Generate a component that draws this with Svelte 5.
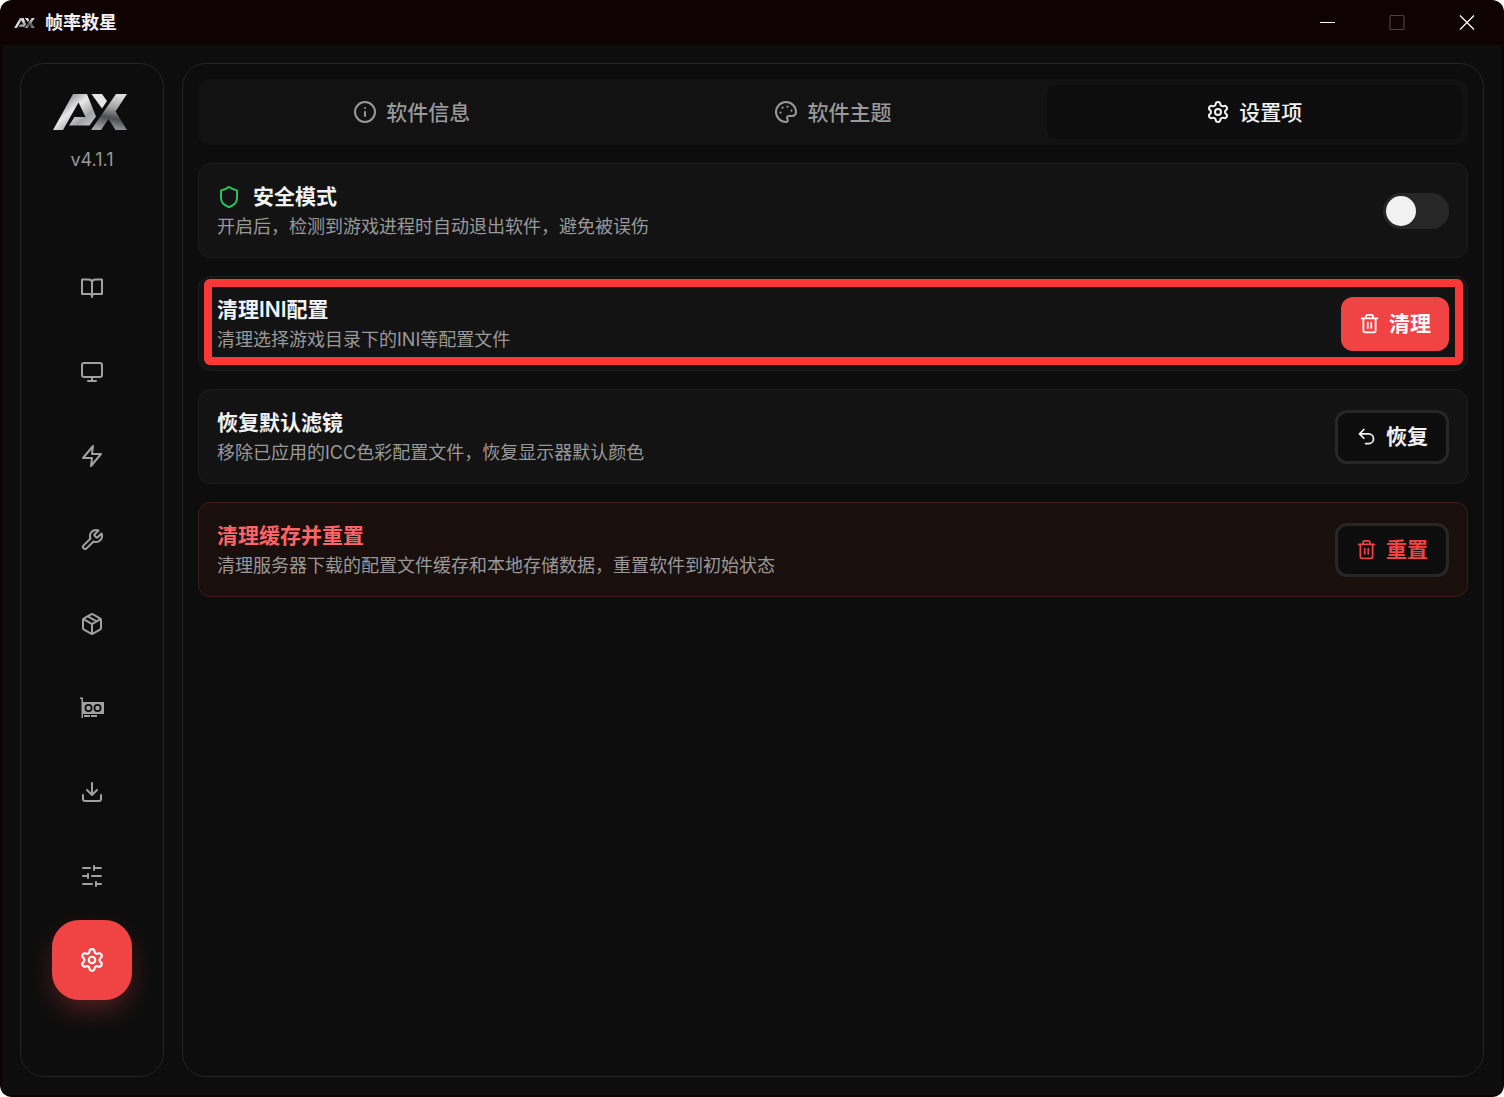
<script lang="ts">
  type Shape = { d: string; fill?: boolean };

  const gear =
    'M9.671 4.136a2.34 2.34 0 0 1 4.659 0 2.34 2.34 0 0 0 3.319 1.915 2.34 2.34 0 0 1 2.33 4.033 2.34 2.34 0 0 0 0 3.831 2.34 2.34 0 0 1-2.33 4.033 2.34 2.34 0 0 0-3.319 1.915 2.34 2.34 0 0 1-4.659 0 2.34 2.34 0 0 0-3.32-1.915 2.34 2.34 0 0 1-2.33-4.033 2.34 2.34 0 0 0 0-3.831A2.34 2.34 0 0 1 6.35 6.051a2.34 2.34 0 0 0 3.319-1.915M15 12a3 3 0 1 1-6 0 3 3 0 0 1 6 0z';

  const icons: Record<string, Shape> = {
    book: { d: 'M2 3.500h6.500c2 0 3.500 1.200 3.500 3 0-1.800 1.500-3 3.500-3H22v14.500h-7.500c-1.500 0-2.500.8-2.500 2 0-1.200-1-2-2.500-2H2zM12 6.500v14.500' },
    monitor: { d: 'M4 3h16a2 2 0 0 1 2 2v10a2 2 0 0 1-2 2H4a2 2 0 0 1-2-2V5a2 2 0 0 1 2-2zM8 21h8M12 17v4' },
    zap: { d: 'M13 2 3 14h9l-1 8 10-12h-9l1-8z' },
    wrench: { d: 'M14.700 6.300a1 1 0 0 0 0 1.400l1.600 1.600a1 1 0 0 0 1.400 0l3.770-3.770a6 6 0 0 1-7.940 7.940l-6.910 6.910a2.120 2.120 0 0 1-3-3l6.910-6.910a6 6 0 0 1 7.940-7.940l-3.760 3.760z' },
    box: { d: 'M16.500 9.400 7.500 4.210M21 16V8a2 2 0 0 0-1-1.730l-7-4a2 2 0 0 0-2 0l-7 4A2 2 0 0 0 3 8v8a2 2 0 0 0 1 1.730l7 4a2 2 0 0 0 2 0l7-4A2 2 0 0 0 21 16zM3.270 6.960 12 12.010l8.730-5.050M12 22.080V12' },
    gpu: {
      fill: true,
      d: 'M0 1.500h3V6h21v12H3v4H1.500V3H0zM8.500 8a4 4 0 1 0 0 8 4 4 0 0 0 0-8zm9 0a4 4 0 1 0 0 8 4 4 0 0 0 0-8zM8.500 9.800a2.200 2.200 0 1 1 0 4.400 2.200 2.200 0 0 1 0-4.400zm9 0a2.200 2.200 0 1 1 0 4.400 2.200 2.200 0 0 1 0-4.400zM4 19h6v2H4zM11 19h6v2h-6z'
    },
    download: { d: 'M21 15v4a2 2 0 0 1-2 2H5a2 2 0 0 1-2-2v-4M7 10l5 5 5-5M12 15V3' },
    sliders: { d: 'M21 4h-7M10 4H3M21 12h-9M8 12H3M21 20h-5M12 20H3M14 2v4M8 10v4M16 18v4' },
    settings: { d: gear },
    info: { d: 'M22 12a10 10 0 1 1-20 0 10 10 0 0 1 20 0zM12 16v-4M12 8v.01' },
    palette: {
      d: 'M12 22a10 10 0 1 1 10-10c0 2.800-2.200 4-4.500 4h-2.700c-1.700 0-2.300 1.700-1.400 3 .9 1.400.2 3-1.400 3zM13.500 6.500v.2M17.500 10.500v.2M8.500 7.500v.2M6.500 12.500v.2'
    },
    shield: { d: 'M20 13c0 5-3.500 7.500-7.660 8.950a1 1 0 0 1-.67-.01C7.500 20.500 4 18 4 13V6a1 1 0 0 1 1-1c2 0 4.500-1.200 6.240-2.720a1.170 1.170 0 0 1 1.520 0C14.510 3.810 17 5 19 5a1 1 0 0 1 1 1z' },
    trash: { d: 'M3 6h18M19 6v14a2 2 0 0 1-2 2H7a2 2 0 0 1-2-2V6M8 6V4a2 2 0 0 1 2-2h4a2 2 0 0 1 2 2v2M10 11v6M14 11v6' },
    undo: { d: 'M9 14 4 9l5-5M4 9h10.500a5.500 5.500 0 0 1 0 11H11' }
  };

  const navItems = [
    { id: 'book', label: '教程' },
    { id: 'monitor', label: '显示' },
    { id: 'zap', label: '加速' },
    { id: 'wrench', label: '工具' },
    { id: 'box', label: '资源' },
    { id: 'gpu', label: '显卡' },
    { id: 'download', label: '下载' },
    { id: 'sliders', label: '调节' },
    { id: 'settings', label: '设置' }
  ];

  const tabs = [
    { id: 'info', label: '软件信息' },
    { id: 'palette', label: '软件主题' },
    { id: 'settings', label: '设置项' }
  ];

  let activeNav = $state('settings');
  let activeTab = $state('settings');
  let safeMode = $state(false);
</script>

{#snippet icon(name: string)}
  <svg class="icon" class:solid={icons[name].fill} viewBox="0 0 24 24" aria-hidden="true">
    <path d={icons[name].d} />
  </svg>
{/snippet}

{#snippet logo(id: string)}
  <svg class="logo" viewBox="0 0 74 36" aria-hidden="true">
    <defs>
      <linearGradient id="{id}-left" x1="0" y1="0" x2="1" y2="1">
        <stop offset="0.2" stop-color="#8d8e92" />
        <stop offset="0.45" stop-color="#e8e8ea" />
        <stop offset="0.7" stop-color="#a2a3a7" />
        <stop offset="1" stop-color="#d5d5d8" />
      </linearGradient>
      <linearGradient id="{id}-right" x1="0.6" y1="0" x2="0.4" y2="1">
        <stop offset="0" stop-color="#dededf" />
        <stop offset="0.35" stop-color="#a4a5a8" />
        <stop offset="0.65" stop-color="#4b4d51" />
        <stop offset="1" stop-color="#a5a6a9" />
      </linearGradient>
    </defs>
    <path fill="url(#{id}-left)" d="M0 36 20 0h14L43 22.500 36.500 31.500H16L21.500 23H32.500L25.500 8.500 10 36z" />
    <path fill="#e6e6e8" d="M38.500 0h10.500l5 7-5 7.500z" />
    <path fill="url(#{id}-right)" d="M63 0h11L62.500 17.500 74 36H62.500L55.500 25 48 36H38z" />
  </svg>
{/snippet}

<div class="window">
  <header class="titlebar">
    <div class="brand">
      {@render logo('bar')}
      <span>帧率救星</span>
    </div>
    <div class="controls">
      <button type="button" aria-label="最小化">
        <svg viewBox="0 0 16 16"><path d="M1 8.500h15" /></svg>
      </button>
      <button type="button" aria-label="最大化" disabled>
        <svg viewBox="0 0 16 16"><rect x="1" y="1.500" width="14" height="14" rx="1" /></svg>
      </button>
      <button type="button" aria-label="关闭">
        <svg viewBox="0 0 16 16"><path d="m1 1.500 14 14M15 1.500l-14 14" /></svg>
      </button>
    </div>
  </header>

  <div class="body">
    <aside class="sidebar">
      {@render logo('side')}
      <span class="version">v4.1.1</span>
      <nav>
        {#each navItems as item (item.id)}
          <button
            type="button"
            class:active={activeNav === item.id}
            aria-label={item.label}
            onclick={() => (activeNav = item.id)}
          >
            {@render icon(item.id)}
          </button>
        {/each}
      </nav>
    </aside>

    <main>
      <div class="tabs" role="tablist">
        {#each tabs as tab (tab.id)}
          <button
            type="button"
            role="tab"
            aria-selected={activeTab === tab.id}
            class:active={activeTab === tab.id}
            onclick={() => (activeTab = tab.id)}
          >
            {@render icon(tab.id)}
            {tab.label}
          </button>
        {/each}
      </div>

      <section class="card">
        <div class="text">
          <h3><span class="shield">{@render icon('shield')}</span><label for="safe-mode">安全模式</label></h3>
          <p>开启后，检测到游戏进程时自动退出软件，避免被误伤</p>
        </div>
        <input id="safe-mode" class="switch" type="checkbox" role="switch" bind:checked={safeMode} />
      </section>

      <section class="card highlighted">
        <div class="text">
          <h3>清理INI配置</h3>
          <p>清理选择游戏目录下的INI等配置文件</p>
        </div>
        <button type="button" class="btn primary">{@render icon('trash')}清理</button>
      </section>

      <section class="card">
        <div class="text">
          <h3>恢复默认滤镜</h3>
          <p>移除已应用的ICC色彩配置文件，恢复显示器默认颜色</p>
        </div>
        <button type="button" class="btn outline">{@render icon('undo')}恢复</button>
      </section>

      <section class="card danger">
        <div class="text">
          <h3>清理缓存并重置</h3>
          <p>清理服务器下载的配置文件缓存和本地存储数据，重置软件到初始状态</p>
        </div>
        <button type="button" class="btn outline red">{@render icon('trash')}重置</button>
      </section>
    </main>
  </div>
</div>

<style>
  :global(body) {
    background: #fff;
  }
  .window {
    box-sizing: border-box;
    display: flex;
    flex-direction: column;
    min-height: 100vh;
    padding: 0 2px 2px;
    border-radius: 12px;
    overflow: hidden;
    background: #0e0202;
    color: #f2f2f2;
    font-family: Inter, 'Noto Sans CJK SC', sans-serif;
    font-size: 18px;
    line-height: 27px;
  }
  button {
    display: flex;
    align-items: center;
    justify-content: center;
    margin: 0;
    padding: 0;
    border: 0;
    background: none;
    color: inherit;
    font: inherit;
    cursor: pointer;
  }
  .icon {
    display: block;
    flex: none;
    width: 24px;
    height: 24px;
    fill: none;
    stroke: currentColor;
    stroke-width: 2;
    stroke-linecap: round;
    stroke-linejoin: round;
  }
  .icon.solid {
    fill: currentColor;
    fill-rule: evenodd;
    stroke: none;
  }

  .titlebar {
    display: flex;
    align-items: center;
    justify-content: space-between;
    height: 45px;
  }
  .brand {
    display: flex;
    align-items: center;
    gap: 10px;
    padding-left: 12px;
    font-weight: 600;
  }
  .brand .logo {
    width: 21px;
    height: 10px;
  }
  .controls {
    display: flex;
    align-self: flex-start;
  }
  .controls button {
    width: 70px;
    height: 44px;
  }
  .controls svg {
    width: 16px;
    height: 16px;
    fill: none;
    stroke: #fff;
    stroke-width: 1.2;
  }
  .controls button:disabled {
    opacity: 0.25;
  }

  .body {
    display: flex;
    flex: 1;
    gap: 18px;
    padding: 18px;
    background: #0d0d0d;
  }
  .sidebar,
  main {
    box-sizing: border-box;
    border: 1px solid #252525;
    border-radius: 24px;
  }
  .sidebar {
    display: flex;
    flex: none;
    flex-direction: column;
    align-items: center;
    width: 144px;
    padding-top: 30px;
  }
  .sidebar .logo {
    width: 74px;
    height: 36px;
    margin-right: 4px;
  }
  .version {
    margin-top: 16px;
    color: #999;
  }
  nav {
    display: flex;
    flex-direction: column;
    gap: 4px;
    margin-top: 75px;
  }
  nav button {
    width: 80px;
    height: 80px;
    border-radius: 27px;
    color: #a1a1a1;
  }
  nav button.active {
    background: #f04444;
    box-shadow: 0 12px 30px -6px rgba(240, 68, 68, 0.4);
    color: #fff;
  }
  nav button.active .icon {
    width: 26px;
    height: 26px;
  }

  main {
    display: flex;
    flex: 1;
    flex-direction: column;
    gap: 18px;
    padding: 15px;
  }
  .tabs {
    display: grid;
    grid-template-columns: repeat(3, 1fr);
    gap: 6px;
    padding: 6px;
    border-radius: 12px;
    background: #121212;
  }
  .tabs button {
    gap: 9px;
    height: 54px;
    border-radius: 9px;
    color: #999;
    font-size: 21px;
    font-weight: 500;
  }
  .tabs button.active {
    background: #0d0d0d;
    color: #f2f2f2;
  }

  .card {
    position: relative;
    display: flex;
    align-items: center;
    justify-content: space-between;
    padding: 18px;
    border: 1px solid #1d1d1d;
    border-radius: 12px;
    background: #131313;
  }
  .card.highlighted::after {
    content: '';
    position: absolute;
    inset: 2px 4px 5px 5px;
    border: 8px solid #fb3838;
    border-radius: 6px;
    pointer-events: none;
  }
  .card.danger {
    border-color: #451a1a;
    background: #190f0d;
  }
  .text {
    margin-bottom: -1px;
  }
  h3 {
    display: flex;
    align-items: center;
    gap: 12px;
    margin: 0 0 1px;
    font-size: 21px;
    font-weight: 600;
    line-height: 30px;
  }
  .danger h3 {
    color: #ff6467;
  }
  .shield {
    color: #22c55e;
  }
  p {
    margin: 0;
    color: #999;
  }

  .switch {
    appearance: none;
    flex: none;
    width: 66px;
    height: 36px;
    margin: 0;
    padding: 3px;
    border-radius: 18px;
    background: #272727;
    cursor: pointer;
  }
  .switch::before {
    content: '';
    display: block;
    width: 30px;
    height: 30px;
    border-radius: 50%;
    background: #f2f2f2;
  }
  .switch:checked {
    background: #f04444;
  }
  .switch:checked::before {
    margin-left: auto;
  }

  .btn {
    box-sizing: border-box;
    flex: none;
    gap: 9px;
    height: 54px;
    padding: 0 18px;
    border-radius: 12px;
    font-size: 21px;
    font-weight: 600;
  }
  .btn .icon {
    width: 21px;
    height: 21px;
  }
  .primary {
    background: #f04444;
    color: #fff;
  }
  .outline {
    border: 3px solid #272727;
    background: #0d0d0d;
  }
  .red {
    color: #f04444;
  }
</style>
